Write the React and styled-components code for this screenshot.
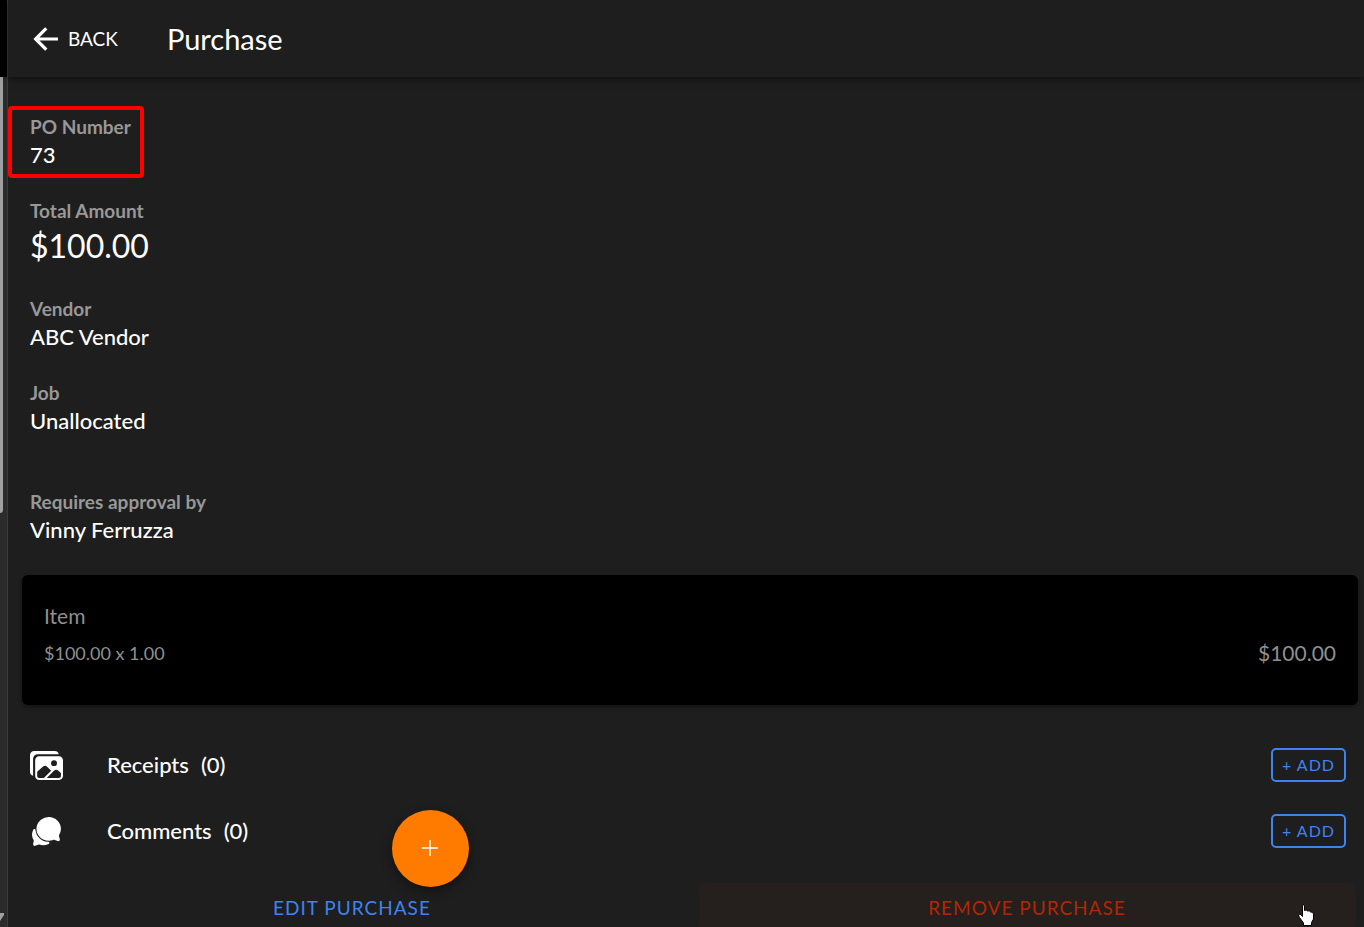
import React from 'react'
import styled, { ThemeProvider, createGlobalStyle } from 'styled-components'
import { IoArrowBackSharp, IoChatbubbles, IoImages } from 'react-icons/io5'

const theme = {
  background: '#1e1e1e',
  card: '#000000',
  text: '#ffffff',
  label: '#989898',
  muted: '#8f8f8f',
  blue: '#3f83f0',
  red: '#b32604',
  highlight: '#ff0000',
  orange: '#ff7b00',
  track: '#2b2b2b',
  thumb: '#a0a0a0',
  divider: '#3b3b3b'
}

const GlobalStyle = createGlobalStyle`
  * {
    box-sizing: border-box;
  }
  body {
    margin: 0;
    background: #1e1e1e;
    font-family: Lato, 'Liberation Sans', sans-serif;
  }
  button {
    font-family: inherit;
    cursor: pointer;
  }
`

const Shell = styled.div`
  position: relative;
  display: flex;
  height: 100vh;
  overflow: hidden;
  background: ${props => props.theme.background};
  color: ${props => props.theme.text};
`

const Rail = styled.div`
  display: flex;
  flex-direction: column;
  flex: none;
  width: 8px;
  background: ${props => props.theme.track};
  border-right: 1px solid ${props => props.theme.divider};
`

const RailTop = styled.div`
  height: 77px;
  background: #000;
`

const RailThumb = styled.div`
  width: 3px;
  height: 47%;
  background: ${props => props.theme.thumb};
  border-radius: 0 0 3px 0;
`

const RailArrow = styled.svg`
  display: block;
  width: 4px;
  height: 8px;
  margin-top: auto;
  margin-bottom: 6px;
  fill: ${props => props.theme.thumb};
`

const Page = styled.div`
  flex: 1;
  min-width: 0;
`

const Header = styled.header`
  display: flex;
  align-items: center;
  gap: 49px;
  height: 77px;
  padding: 0 21px;
  box-shadow: 0 2px 8px rgba(0, 0, 0, .5);
`

const BackButton = styled.button`
  display: flex;
  align-items: center;
  gap: 5px;
  padding: 0;
  border: 0;
  background: none;
  color: inherit;
  font-size: 19px;

  svg {
    width: 34px;
    height: 34px;
  }
`

const Title = styled.h1`
  margin: 0;
  font-size: 29px;
  font-weight: 400;
  line-height: 34px;
`

const Fields = styled.dl`
  display: flex;
  flex-direction: column;
  gap: 28px;
  margin: 0;
  padding: 38px 22px 29px;
`

const Field = styled.div`
  position: relative;
  align-self: flex-start;
  margin-top: ${props => props.$spaced ? '25px' : '0'};
`

const FieldLabel = styled.dt`
  color: ${props => props.theme.label};
  font-size: 19px;
  font-weight: 700;
  line-height: 24px;
`

const FieldValue = styled.dd`
  margin: 0;
  font-size: ${props => props.$large ? '32px' : '22px'};
  font-weight: ${props => props.$large ? 400 : 500};
  line-height: ${props => props.$large ? '46px' : '32px'};
`

const Highlight = styled.span`
  position: absolute;
  top: -9px;
  left: -22px;
  width: 136px;
  height: 72px;
  border: 4px solid ${props => props.theme.highlight};
  border-radius: 4px;
`

const ItemCard = styled.section`
  display: flex;
  align-items: flex-end;
  justify-content: space-between;
  margin: 0 6px 0 14px;
  padding: 28px 22px 40px;
  background: ${props => props.theme.card};
  border-radius: 6px;
  box-shadow: 0 2px 4px rgba(0, 0, 0, .4);
  color: ${props => props.theme.muted};
`

const ItemName = styled.h2`
  margin: 0 0 12px;
  font-size: 21px;
  font-weight: 400;
  line-height: 26px;
`

const ItemDetail = styled.p`
  margin: 0;
  font-size: 18px;
  line-height: 24px;
`

const ItemTotal = styled.span`
  font-size: 21px;
  line-height: 24px;
`

const Sections = styled.div`
  padding: 27px 18px 19px 22px;
`

const SectionRow = styled.div`
  display: flex;
  align-items: center;
  height: 66px;
`

const SectionIcon = styled.span`
  display: flex;
  align-items: center;
  justify-content: center;
  width: 33px;
  margin-right: 44px;

  svg {
    width: ${props => props.$size}px;
    height: ${props => props.$size}px;
    flex: none;
  }
`

const SectionTitle = styled.h2`
  display: flex;
  gap: 12px;
  flex: 1;
  margin: 0;
  font-size: 22px;
  font-weight: 500;
  line-height: 26px;
`

const AddButton = styled.button`
  width: 75px;
  height: 34px;
  padding: 0 0 2px;
  border: 2px solid ${props => props.theme.blue};
  border-radius: 5px;
  background: none;
  color: ${props => props.theme.blue};
  font-size: 16px;
  letter-spacing: 1px;
`

const Actions = styled.div`
  display: flex;
  gap: 19px;
  padding: 0 9px 0 16px;
`

const ActionButton = styled.button`
  flex: 1;
  height: 48px;
  padding: 0;
  border: 0;
  border-radius: 6px;
  background: ${props => props.$danger ? '#251f1d' : 'none'};
  color: ${props => props.$danger ? props.theme.red : props.theme.blue};
  font-size: 19px;
  letter-spacing: 1px;
`

const FloatingButton = styled.button`
  position: absolute;
  left: 392px;
  bottom: 40px;
  display: flex;
  align-items: center;
  justify-content: center;
  width: 77px;
  height: 77px;
  padding: 0;
  border: 0;
  border-radius: 50%;
  background: ${props => props.theme.orange};
  box-shadow: 0 4px 12px rgba(0, 0, 0, .4);
  color: #fff;
`

const Pointer = styled.svg`
  position: absolute;
  right: 49px;
  bottom: 1px;
  width: 17px;
  height: 22px;
  pointer-events: none;
`

const fields = [
  { label: 'PO Number', value: '73', highlighted: true },
  { label: 'Total Amount', value: '$100.00', large: true },
  { label: 'Vendor', value: 'ABC Vendor' },
  { label: 'Job', value: 'Unallocated' },
  { label: 'Requires approval by', value: 'Vinny Ferruzza', spaced: true }
]

const sections = [
  { title: 'Receipts', count: 0, Icon: IoImages, size: 33 },
  { title: 'Comments', count: 0, Icon: IoChatbubbles, size: 33 }
]

const App = () => {
  return (
    <ThemeProvider theme={theme}>
      <GlobalStyle />
      <Shell>
        <Rail>
          <RailTop />
          <RailThumb />
          <RailArrow viewBox="0 0 4 8" aria-hidden="true">
            <path d="M0 0H4V2L0 8Z" />
          </RailArrow>
        </Rail>
        <Page>
          <Header>
            <BackButton type="button">
              <IoArrowBackSharp />
              BACK
            </BackButton>
            <Title>Purchase</Title>
          </Header>
          <main>
            <Fields>
              {fields.map(field => (
                <Field key={field.label} $spaced={field.spaced}>
                  <FieldLabel>{field.label}</FieldLabel>
                  <FieldValue $large={field.large}>
                    {field.value}
                    {field.highlighted && <Highlight />}
                  </FieldValue>
                </Field>
              ))}
            </Fields>
            <ItemCard>
              <div>
                <ItemName>Item</ItemName>
                <ItemDetail>$100.00 x 1.00</ItemDetail>
              </div>
              <ItemTotal>$100.00</ItemTotal>
            </ItemCard>
            <Sections>
              {sections.map(({ title, count, Icon, size }) => (
                <SectionRow key={title}>
                  <SectionIcon $size={size}><Icon /></SectionIcon>
                  <SectionTitle>
                    <span>{title}</span>
                    <span>({count})</span>
                  </SectionTitle>
                  <AddButton type="button">+ ADD</AddButton>
                </SectionRow>
              ))}
            </Sections>
            <Actions>
              <ActionButton type="button">EDIT PURCHASE</ActionButton>
              <ActionButton type="button" $danger>REMOVE PURCHASE</ActionButton>
            </Actions>
          </main>
        </Page>
        <FloatingButton type="button" aria-label="Add">
          <svg width="17" height="17" viewBox="0 0 17 17" stroke="currentColor" strokeWidth="1.5">
            <path d="M8 0V16M0 8H16" />
          </svg>
        </FloatingButton>
        <Pointer viewBox="0 0 17 22" aria-hidden="true">
          <path
            d="M4.500 1.500Q5.500 .3 6.500 1.500V6.500Q8.500 5.500 9.500 7Q11.500 6.200 12.500 8Q15 7.500 15.500 10V15L13.500 18.500V21.500H5.500V19L1.500 13.500Q-.3 10.500 2 10L4.500 12.500Z"
            fill="#fff"
            stroke="#000"
          />
        </Pointer>
      </Shell>
    </ThemeProvider>
  )
}

export default App
